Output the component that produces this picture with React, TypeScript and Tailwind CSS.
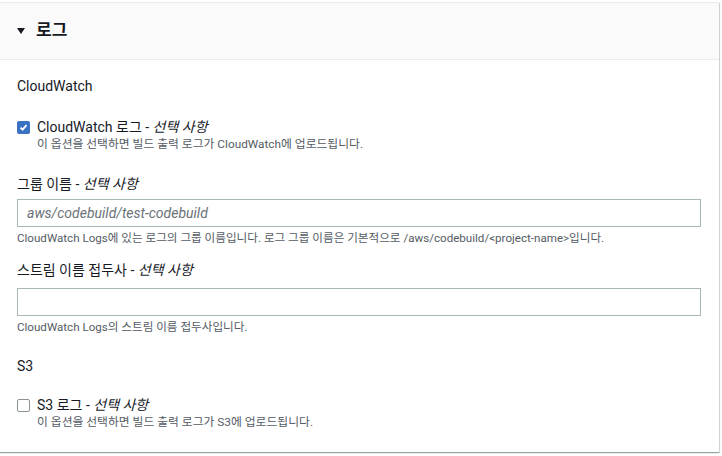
const FONT = "font-['Roboto','Noto_Sans_CJK_KR',sans-serif]";

function Checkbox({ checked }: { checked: boolean }) {
  if (checked) {
    return (
      <span className="mt-[4px] flex h-[13px] w-[13px] shrink-0 items-center justify-center rounded-[2px] bg-[#3b73c4]">
        <svg width="9" height="9" viewBox="0 0 9 9" fill="none">
          <path d="M1.5 4.6 L3.6 6.7 L7.5 2.2" stroke="white" strokeWidth="1.8" />
        </svg>
      </span>
    );
  }
  return <span className="mt-[4px] h-[13px] w-[13px] shrink-0 rounded-[2px] border border-[#8a9396] bg-white" />;
}

function Optional() {
  return (
    <>
      {" - "}
      <span className="italic">선택 사항</span>
    </>
  );
}

export default function App() {
  return (
    <div className={`h-[456px] w-[722px] overflow-hidden bg-white text-[#16191f] ${FONT}`}>
      <div className="ml-[-2px] mt-[2px] w-[721px] border-t border-[#eaeded] bg-white shadow-[0_1px_1px_0_rgba(0,28,36,0.3),1px_1px_1px_0_rgba(0,28,36,0.15)]">
        {/* Header */}
        <div className="flex h-[57px] items-center gap-[11px] border-b border-[#eaeded] bg-[#fafafa] pb-[3px] pl-[19px]">
          <svg width="8" height="6" viewBox="0 0 8 6" className="mt-[2px]">
            <path d="M0 0 H8 L4 6 Z" fill="#16191f" />
          </svg>
          <span className="text-[17px] font-bold leading-[20px]">로그</span>
        </div>

        {/* Body */}
        <div className="flex flex-col pb-[22px] pl-[19px] pr-[18px] pt-[16px]">
          <div className="text-[14px] leading-[20px]">CloudWatch</div>

          <div className="mt-[21px] flex gap-[7px]">
            <Checkbox checked />
            <div className="flex flex-col">
              <span className="text-[14px] leading-[20px]">
                CloudWatch 로그<Optional />
              </span>
              <span className="mt-[-1px] text-[11.8px] leading-[16px] text-[#545b64]">
                이 옵션을 선택하면 빌드 출력 로그가 CloudWatch에 업로드됩니다.
              </span>
            </div>
          </div>

          <label className="mt-[22px] text-[14px] leading-[20px]">
            그룹 이름<Optional />
          </label>
          <input
            className="mt-[5px] h-[28px] w-full border border-[#aab7b8] bg-white px-[9px] text-[14px] placeholder:italic placeholder:text-[#6b7378] outline-none"
            placeholder="aws/codebuild/test-codebuild"
          />
          <span className="mt-[3px] text-[11.6px] leading-[16px] text-[#545b64]">
            CloudWatch Logs에 있는 로그의 그룹 이름입니다. 로그 그룹 이름은 기본적으로 /aws/codebuild/&lt;project-name&gt;입니다.
          </span>

          <label className="mt-[14px] text-[14px] leading-[20px]">
            스트림 이름 접두사<Optional />
          </label>
          <input className="mt-[8px] h-[28px] w-full border border-[#aab7b8] bg-white px-[9px] text-[14px] outline-none" />
          <span className="mt-[3px] text-[11.6px] leading-[16px] text-[#545b64]">
            CloudWatch Logs의 스트림 이름 접두사입니다.
          </span>

          <div className="mt-[21px] text-[14px] leading-[20px]">S3</div>

          <div className="mt-[19px] flex gap-[7px]">
            <Checkbox checked={false} />
            <div className="flex flex-col">
              <span className="text-[14px] leading-[20px]">
                S3 로그<Optional />
              </span>
              <span className="mt-[-1px] text-[11.8px] leading-[16px] text-[#545b64]">
                이 옵션을 선택하면 빌드 출력 로그가 S3에 업로드됩니다.
              </span>
            </div>
          </div>
        </div>
      </div>
    </div>
  );
}
